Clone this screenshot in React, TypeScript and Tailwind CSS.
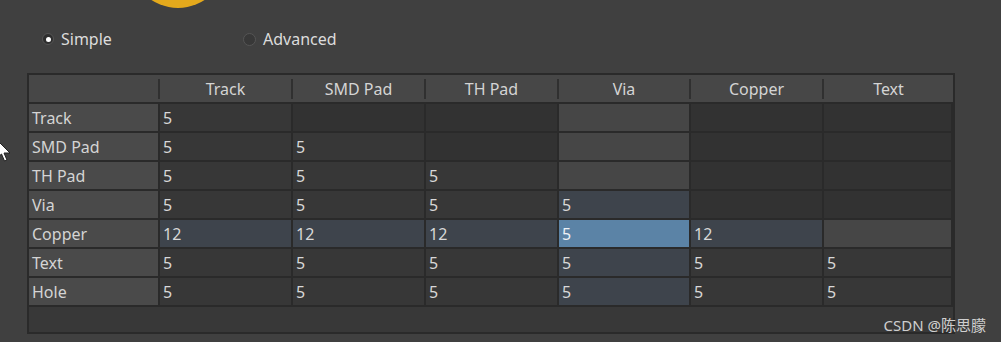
import React from "react";

const rows = ["Track", "SMD Pad", "TH Pad", "Via", "Copper", "Text", "Hole"];
const cols = ["Track", "SMD Pad", "TH Pad", "Via", "Copper", "Text"];
const colW = ["w-[133px]", "w-[133px]", "w-[133px]", "w-[132px]", "w-[133px]", "w-[129px]"];

function value(r: number, c: number) {
  if (c > r) return "";
  if (r === 4) return c === 3 ? "5" : "12";
  return "5";
}

function cellBg(r: number, c: number) {
  const sel = r === 4 || c === 3;
  if (c > r) return sel ? "bg-[#464646]" : "bg-[#323232]";
  if (r === 4 && c === 3) return "bg-[#5b83a6]";
  if (sel) return "bg-[#3e444c]";
  return "bg-[#373737]";
}

export default function App() {
  return (
    <div
      className="relative w-[1001px] h-[342px] overflow-hidden bg-[#404040] text-[#d6d6d6]"
      style={{ fontFamily: '"Noto Sans", "Open Sans", sans-serif' }}
    >
      {/* cut-off yellow circle */}
      <div className="h-[8px] overflow-hidden pl-[130px]">
        <div className="w-[96px] h-[96px] -mt-[88px] rounded-full bg-[#e4a91c]" />
      </div>

      {/* radios */}
      <div className="flex items-center h-[64px] pb-[1px] -mt-[8px] pt-[15px]">
        <div className="flex items-center pl-[42px] w-[243px]">
          <div className="w-[12px] h-[12px] rounded-full bg-[#2e2e2e] border border-[#555] flex items-center justify-center">
            <div className="w-[5px] h-[5px] rounded-full bg-white" />
          </div>
          <span className="ml-[7px] text-[16px] leading-none text-[#dcdcdc]">Simple</span>
        </div>
        <div className="flex items-center">
          <div className="w-[13px] h-[13px] rounded-full bg-[#383838] border border-[#555]" />
          <span className="ml-[7px] text-[16px] leading-none text-[#dcdcdc]">Advanced</span>
        </div>
      </div>

      {/* table */}
      <div className="ml-[27px] mt-[9px] w-[928px] border-2 border-[#2a2a2a] bg-[#383838]">
        {/* header */}
        <div className="flex h-[29px] bg-[#474747] border-b-2 border-[#2a2a2a]">
          <div className="w-[131px] flex items-center justify-end">
            <div className="w-[2px] h-[20px] bg-[#303030]" />
          </div>
          {cols.map((c, i) => (
            <div key={c} className={`${colW[i]} flex items-center`}>
              <span className="flex-1 text-center text-[16px] leading-none pt-[1px] text-[#d4d4d4]">{c}</span>
              {i < cols.length - 1 && <div className="w-[2px] h-[20px] bg-[#303030]" />}
            </div>
          ))}
        </div>
        {/* body */}
        {rows.map((r, ri) => (
          <div key={r} className="flex h-[29px]">
            <div className="w-[131px] bg-[#4a4a4a] border-r-2 border-b-2 border-[#2a2a2a] flex items-center pl-[3px] pt-[1px] text-[16px] leading-none text-[#d4d4d4]">
              {r}
            </div>
            {cols.map((c, ci) => (
              <div
                key={c}
                className={`${colW[ci]} ${cellBg(ri, ci)} border-r-2 border-b-2 border-[#2a2a2a] flex items-center pl-[3px] pt-[1px] text-[16px] leading-none ${
                  ri === 4 && ci === 3 ? "text-[#eef2f6]" : "text-[#d8d8d8]"
                }`}
              >
                {value(ri, ci)}
              </div>
            ))}
          </div>
        ))}
        <div className="h-[25px] bg-[#383838]" />
      </div>

      {/* mouse cursor */}
      <svg className="absolute left-[-4px] top-[139px]" width="16" height="24" viewBox="0 0 16 24">
        <path d="M1 1 L1 19 L5.5 15 L8.5 22 L11 21 L8 14 L14 14 Z" fill="#fff" stroke="#222" strokeWidth="1" />
      </svg>

      {/* watermark */}
      <div
        className="absolute right-[15px] top-[314px] text-[15px] text-[#cfcfcf] whitespace-nowrap"
        style={{ fontFamily: '"Noto Sans", "Noto Sans CJK SC", sans-serif' }}
      >
        CSDN @陈思朦
      </div>
    </div>
  );
}
